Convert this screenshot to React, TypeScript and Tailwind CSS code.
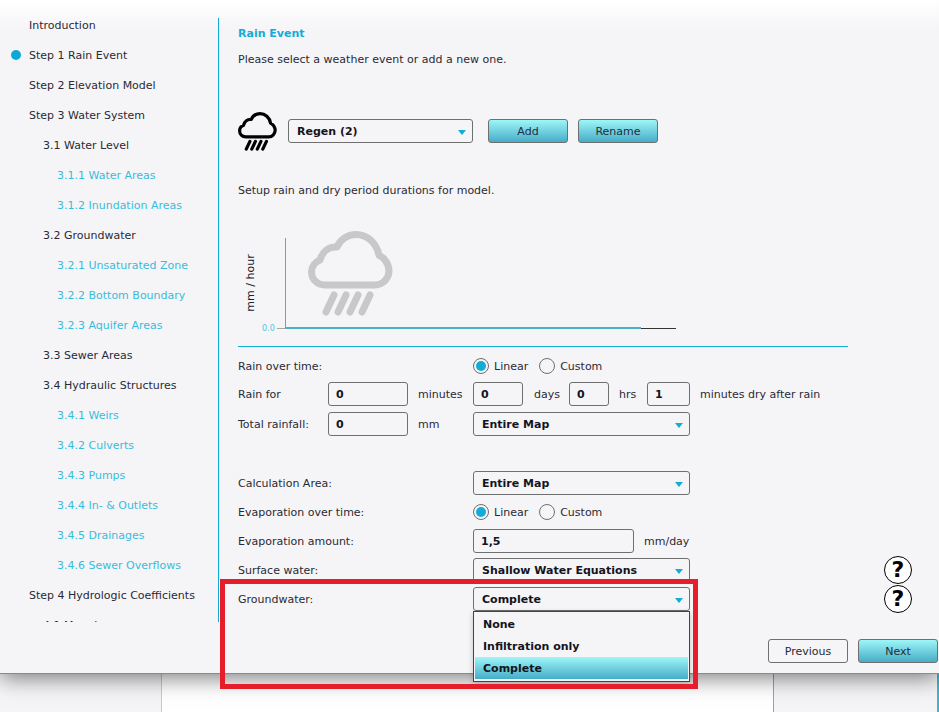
const NAV = [
  { label: 'Introduction', level: 0 },
  { label: 'Step 1 Rain Event', level: 0, active: true },
  { label: 'Step 2 Elevation Model', level: 0 },
  { label: 'Step 3 Water System', level: 0 },
  { label: '3.1 Water Level', level: 1 },
  { label: '3.1.1 Water Areas', level: 2 },
  { label: '3.1.2 Inundation Areas', level: 2 },
  { label: '3.2 Groundwater', level: 1 },
  { label: '3.2.1 Unsaturated Zone', level: 2 },
  { label: '3.2.2 Bottom Boundary', level: 2 },
  { label: '3.2.3 Aquifer Areas', level: 2 },
  { label: '3.3 Sewer Areas', level: 1 },
  { label: '3.4 Hydraulic Structures', level: 1 },
  { label: '3.4.1 Weirs', level: 2 },
  { label: '3.4.2 Culverts', level: 2 },
  { label: '3.4.3 Pumps', level: 2 },
  { label: '3.4.4 In- & Outlets', level: 2 },
  { label: '3.4.5 Drainages', level: 2 },
  { label: '3.4.6 Sewer Overflows', level: 2 },
  { label: 'Step 4 Hydrologic Coefficients', level: 0 },
  { label: '4.1 Manning', level: 1 },
];

const BUTTON = 'h-[24px] w-[80px] pt-[2px] rounded-[3px] border border-[#6f6f6f] text-[11px] text-[#20303a] bg-gradient-to-b from-[#9df6f8] to-[#45adc8]';

function RainCloud({ className, color }: { className: string; color: string }) {
  return (
    <svg viewBox="0 0 85 85" className={className} fill="none" stroke={color} strokeWidth="7" strokeLinecap="round" strokeLinejoin="round">
      <path d="M17 54H67C75 54 81 47 81 40C81 33 76 26 71 24.5C69 12 59 3.5 48 3.5C39 3.5 32 9 29 16C21 15 14 21 12 29C7 31 3.5 36 3.5 41C3.5 48 9 54 17 54Z" />
      <path d="M26 64L18 81M38 64L30 81M50 64L42 81M62 64L54 81" />
    </svg>
  );
}

function Select({ value, className = 'w-[217px]' }: { value: string; className?: string }) {
  return (
    <div className={`h-[24px] ${className} flex items-center justify-between pl-[8px] pr-[5px] pt-[2px] rounded-[3px] border border-[#6f6f6f] bg-[#f5f5f8] font-bold text-[11px] text-[#14141c]`}>
      <span>{value}</span>
      <span className="w-0 h-0 mr-[1px] border-x-[4px] border-x-transparent border-t-[5px] border-t-[#12acd6]" />
    </div>
  );
}

function TextBox({ value, className }: { value: string; className: string }) {
  return (
    <div className={`h-[24px] ${className} flex items-center pl-[7px] pt-[2px] rounded-[3px] border border-[#6f6f6f] bg-[#f5f5f8] font-bold text-[11px] text-[#14141c]`}>
      {value}
    </div>
  );
}

function Radio({ checked, label }: { checked?: boolean; label: string }) {
  return (
    <div className="flex items-center gap-[5px]">
      <span className="w-[16px] h-[16px] rounded-full border border-[#6f6f6f] bg-[#f5f5f8] flex items-center justify-center">
        {checked && <span className="w-[10px] h-[10px] rounded-full bg-[#12acd6]" />}
      </span>
      <span className="pt-[2px]">{label}</span>
    </div>
  );
}

function HelpIcon() {
  return (
    <div className="w-[28px] h-[28px] -my-[2px] ml-auto rounded-full border-[1.5px] border-black bg-white flex items-center justify-center font-bold text-[22px] leading-none text-black">
      ?
    </div>
  );
}

export default function App() {
  return (
    <div className="relative w-[939px] h-[712px] overflow-hidden bg-white flex flex-col text-[11px] text-[#2a2a34] font-['DejaVu_Sans',sans-serif]">
      {/* Wizard panel */}
      <div className="relative z-10 h-[674px] flex shrink-0 border-b border-[#8a8a8a] bg-gradient-to-b from-white to-[#f5f5f8] to-[30px] shadow-[0_3px_22px_rgba(0,0,0,0.55)]">
        {/* Step list */}
        <div className="w-[219px] h-[604px] mt-[18px] shrink-0 overflow-hidden border-r border-[#10abd4]">
          <div className="-mt-[8px]">
            {NAV.map((item) => (
              <div
                key={item.label}
                className={`relative h-[30px] flex items-center pt-[2px] ${item.level === 0 ? 'pl-[29px]' : item.level === 1 ? 'pl-[43px]' : 'pl-[57px] text-[#38bcdc]'}`}
              >
                {item.active && <span className="absolute left-[11px] top-[10px] w-[10px] h-[10px] rounded-full bg-[#0fa9d8]" />}
                {item.label}
              </div>
            ))}
          </div>
        </div>

        {/* Step content */}
        <div className="flex-1 flex flex-col pl-[19px]">
          <h2 className="h-[16px] mt-[26px] leading-[16px] font-bold text-[#12acd6]">Rain Event</h2>
          <p className="h-[16px] mt-[10px] leading-[16px]">Please select a weather event or add a new one.</p>

          <div className="flex items-center mt-[44px] h-[38px]">
            <RainCloud className="w-[39px] h-[39px] shrink-0" color="#000000" />
            <Select value="Regen (2)" className="w-[185px] ml-[11px]" />
            <button className={`${BUTTON} ml-[15px]`}>Add</button>
            <button className={`${BUTTON} ml-[10px]`}>Rename</button>
          </div>

          <p className="h-[16px] mt-[33px] leading-[16px]">Setup rain and dry period durations for model.</p>

          {/* Rainfall chart */}
          <div className="relative h-[109px] w-[610px] mt-[39px] border-b border-[#12acd6] shrink-0">
            <span className="absolute left-[47px] top-[0px] w-px h-[90px] bg-[#3fb4d2]" />
            <span className="absolute left-[39px] top-[90px] w-[8px] h-px bg-[#a8a8a8]" />
            <span className="absolute left-[47px] top-[89px] w-[356px] h-[2px] bg-[#4ab0cc]" />
            <span className="absolute left-[403px] top-[90px] w-[35px] h-px bg-[#333333]" />
            <span className="absolute left-[24px] top-[86px] text-[8px] leading-[10px] text-[#52c3e0]">0.0</span>
            <span className="absolute left-[-17px] top-[37px] w-[60px] text-center -rotate-90 leading-[16px] whitespace-nowrap text-[#20202a]">mm / hour</span>
            <RainCloud className="absolute left-[70px] top-[-7px] w-[85px] h-[85px]" color="#c8c8c8" />
          </div>

          {/* Form */}
          <div className="flex items-center h-[24px] mt-[7px]">
            <span className="w-[235px] pt-[2px]">Rain over time:</span>
            <div className="flex items-center gap-[11px]">
              <Radio checked label="Linear" />
              <Radio label="Custom" />
            </div>
          </div>
          <div className="flex items-center h-[24px] mt-[4px]">
            <span className="w-[90px] pt-[2px]">Rain for</span>
            <TextBox value="0" className="w-[80px]" />
            <span className="w-[65px] pl-[10px] pt-[2px]">minutes</span>
            <TextBox value="0" className="w-[50px]" />
            <span className="w-[46px] pl-[11px] pt-[2px]">days</span>
            <TextBox value="0" className="w-[40px]" />
            <span className="w-[38px] pl-[10px] pt-[2px]">hrs</span>
            <TextBox value="1" className="w-[43px]" />
            <span className="pl-[10px] pt-[3px]">minutes dry after rain</span>
          </div>
          <div className="flex items-center h-[24px] mt-[6px]">
            <span className="w-[90px] pt-[2px]">Total rainfall:</span>
            <TextBox value="0" className="w-[80px]" />
            <span className="w-[65px] pl-[10px] pt-[2px]">mm</span>
            <Select value="Entire Map" />
          </div>

          <div className="flex items-center h-[24px] mt-[35px]">
            <span className="w-[235px] pt-[2px]">Calculation Area:</span>
            <Select value="Entire Map" />
          </div>
          <div className="flex items-center h-[24px] mt-[5px]">
            <span className="w-[235px] pt-[2px]">Evaporation over time:</span>
            <div className="flex items-center gap-[11px]">
              <Radio checked label="Linear" />
              <Radio label="Custom" />
            </div>
          </div>
          <div className="flex items-center h-[24px] mt-[5px]">
            <span className="w-[235px] pt-[2px]">Evaporation amount:</span>
            <TextBox value="1,5" className="w-[161px]" />
            <span className="pl-[10px] pt-[2px]">mm/day</span>
          </div>
          <div className="flex items-center h-[24px] mt-[5px] pr-[27px]">
            <span className="w-[235px] pt-[2px]">Surface water:</span>
            <Select value="Shallow Water Equations" />
            <HelpIcon />
          </div>
          <div className="flex items-center h-[24px] mt-[5px] pr-[27px]">
            <span className="w-[235px] pt-[2px]">Groundwater:</span>
            <Select value="Complete" />
            <HelpIcon />
          </div>

          <div className="flex justify-end gap-[10px] pr-[1px] mt-[28px]">
            <button className="h-[24px] w-[80px] pt-[2px] rounded-[3px] border border-[#6f6f6f] bg-[#f5f5f8] text-[11px] text-[#2a2a34]">Previous</button>
            <button className={BUTTON}>Next</button>
          </div>
        </div>
      </div>

      {/* Window behind the wizard */}
      <div className="flex-1 flex">
        <div className="w-[162px] border-r border-[#a9d3e6] bg-[#f5f5f8]" />
        <div className="w-[611px] bg-white" />
        <div className="flex-1 border-l border-r-2 border-l-[#a0a0a0] border-r-[#4ab0cc] bg-[#f5f5f8]" />
      </div>

      {/* Open dropdown */}
      <div className="absolute z-20 left-[473px] top-[611px] w-[217px] h-[71px] p-[1px] border border-[#444444] bg-[#f5f5f8] font-bold text-[11px] text-[#14141c] shadow-[0_2px_6px_rgba(0,0,0,0.2)]">
        <div className="h-[22px] pl-[8px] pt-[2px] flex items-center">None</div>
        <div className="h-[22px] pl-[8px] pt-[2px] flex items-center">Infiltration only</div>
        <div className="h-[22px] pl-[8px] pt-[2px] flex items-center bg-gradient-to-b from-[#9df6f8] to-[#45adc8]">Complete</div>
      </div>

      {/* Red annotation */}
      <div className="absolute z-30 left-[220px] top-[579px] w-[478px] h-[110px] border-[5px] border-[#e61e2b]" />
    </div>
  );
}
